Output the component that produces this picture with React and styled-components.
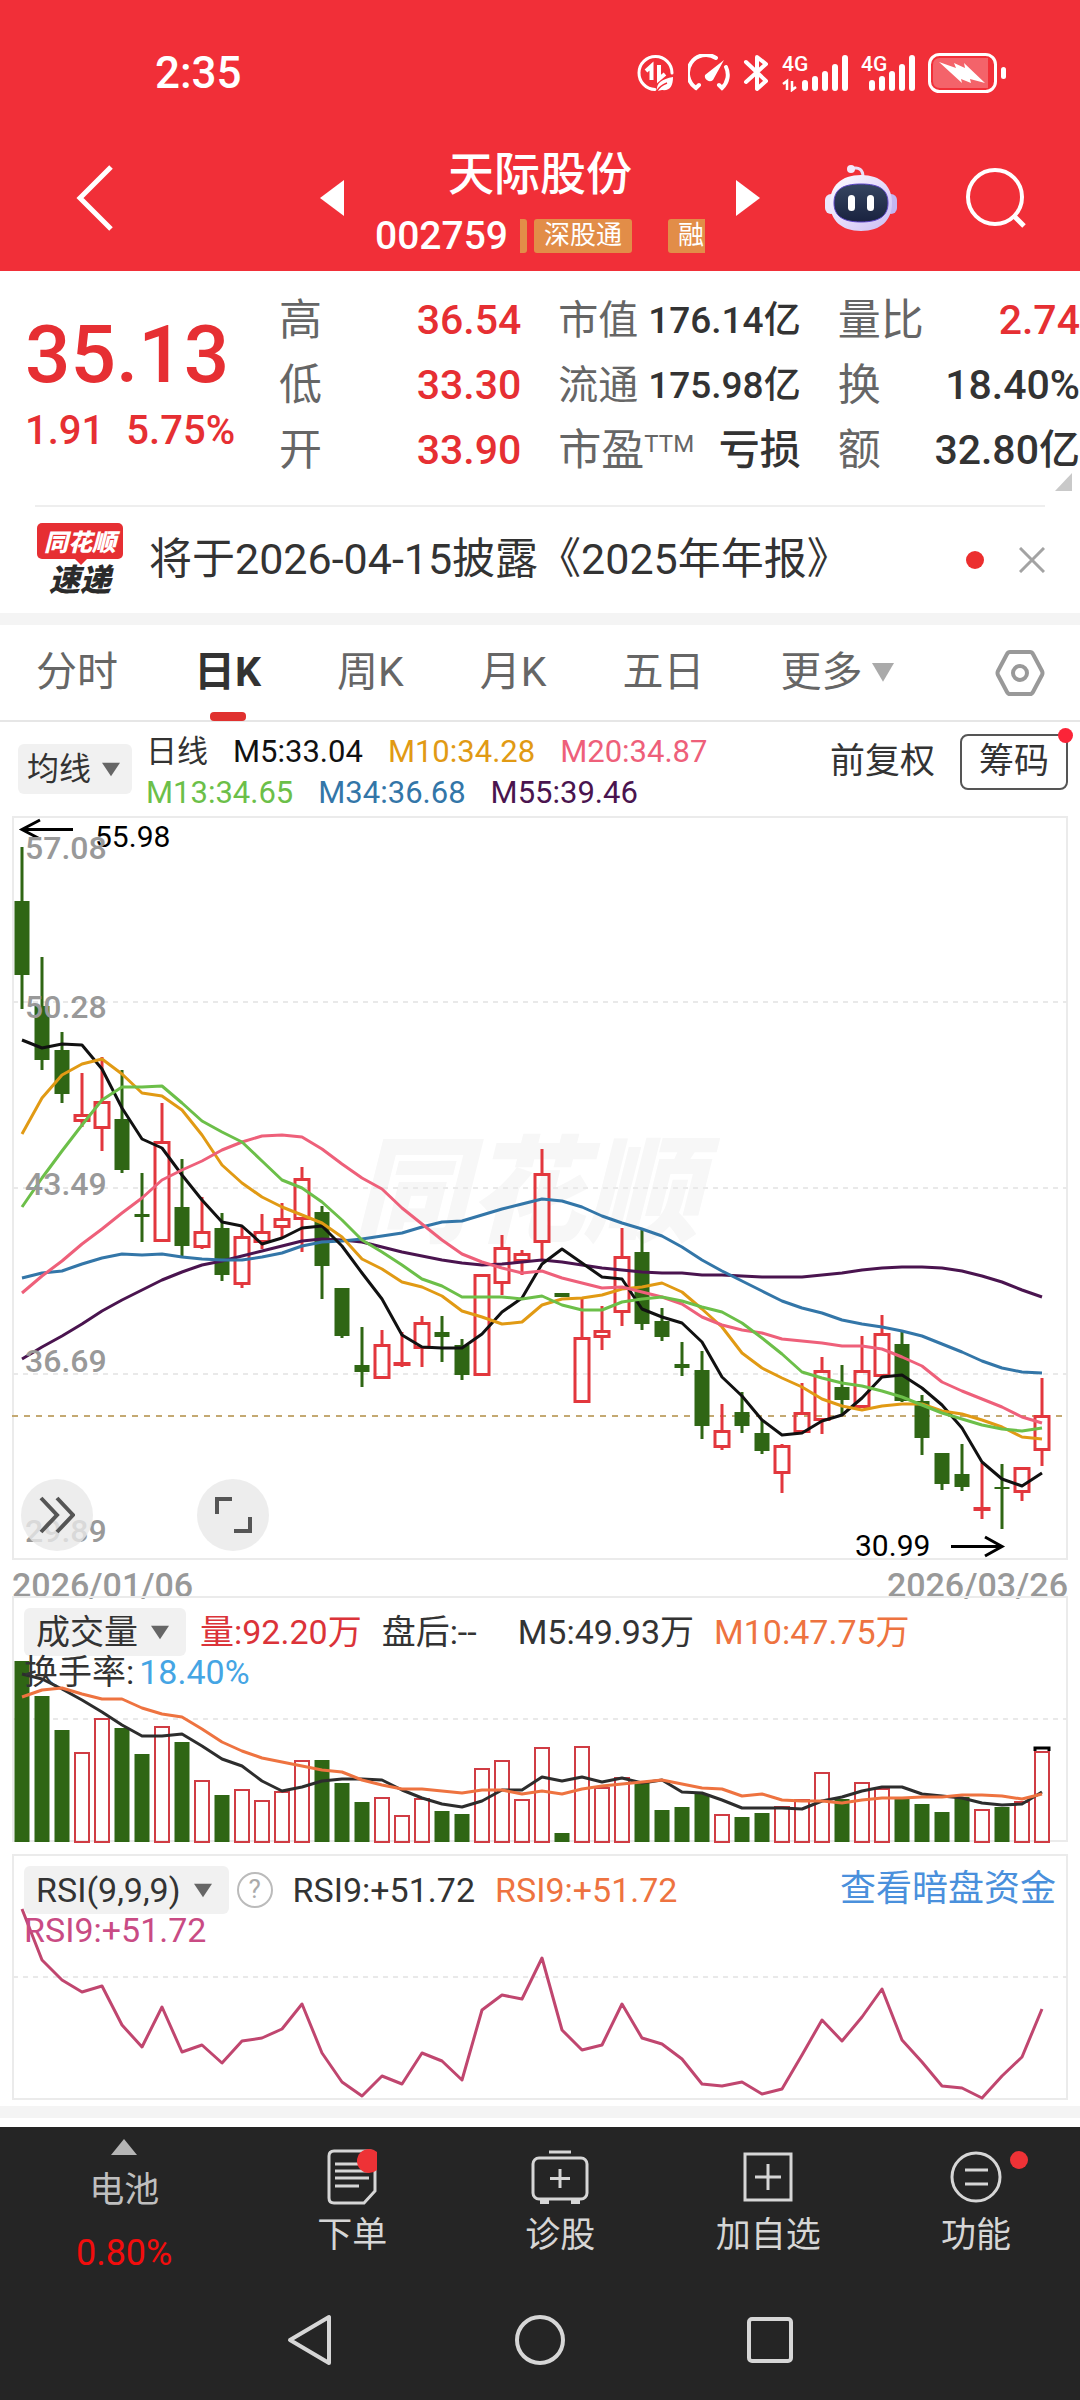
import React from 'react'
import styled, { createGlobalStyle, css } from 'styled-components'

const UP = '#e2373d'
const DOWN = '#2f6614'

// one entry per day: colour, high, body top, body bottom, low (chart units, y grows down)
const candles = [
  ['g', 847, 901, 975, 1009], ['g', 957, 1006, 1060, 1070], ['g', 1032, 1050, 1094, 1103], ['r', 1073, 1114, 1122, 1127],
  ['r', 1057, 1101, 1129, 1151], ['g', 1070, 1119, 1170, 1173], ['g', 1173, 1214, 1217, 1242], ['r', 1103, 1141, 1242, 1242],
  ['g', 1159, 1207, 1246, 1256], ['r', 1197, 1231, 1248, 1249], ['g', 1213, 1228, 1275, 1281], ['r', 1227, 1236, 1285, 1288],
  ['r', 1214, 1231, 1243, 1249], ['r', 1203, 1218, 1228, 1238], ['r', 1167, 1178, 1220, 1252], ['g', 1206, 1212, 1266, 1299],
  ['g', 1288, 1288, 1336, 1338], ['g', 1327, 1365, 1372, 1387], ['r', 1330, 1344, 1379, 1379], ['r', 1332, 1362, 1366, 1367],
  ['r', 1316, 1322, 1349, 1367], ['g', 1316, 1332, 1337, 1362], ['g', 1339, 1345, 1375, 1380], ['r', 1274, 1274, 1376, 1376],
  ['r', 1235, 1247, 1284, 1295], ['r', 1250, 1253, 1262, 1275], ['r', 1149, 1173, 1243, 1260], ['g', 1293, 1293, 1297, 1297],
  ['r', 1297, 1337, 1403, 1403], ['r', 1306, 1330, 1338, 1350], ['r', 1228, 1256, 1313, 1326], ['g', 1230, 1252, 1324, 1330],
  ['g', 1308, 1321, 1337, 1341], ['g', 1342, 1364, 1368, 1376], ['g', 1351, 1370, 1426, 1439], ['r', 1404, 1430, 1448, 1450],
  ['g', 1392, 1412, 1426, 1433], ['g', 1420, 1433, 1451, 1454], ['r', 1444, 1445, 1474, 1493], ['r', 1383, 1412, 1433, 1433],
  ['r', 1357, 1370, 1421, 1434], ['g', 1365, 1387, 1400, 1414], ['r', 1336, 1370, 1408, 1408], ['r', 1315, 1333, 1377, 1377],
  ['g', 1331, 1344, 1401, 1402], ['g', 1395, 1401, 1438, 1455], ['g', 1453, 1453, 1484, 1490], ['g', 1444, 1474, 1487, 1491],
  ['r', 1463, 1507, 1511, 1519], ['g', 1464, 1487, 1489, 1529], ['r', 1467, 1467, 1493, 1501], ['r', 1378, 1415, 1451, 1466],
]

const averages = [
  {
    color: '#4a144f',
    points: [1359, 1347, 1336, 1324, 1311, 1300, 1290, 1280, 1272, 1265, 1261, 1256, 1251, 1246, 1241, 1239, 1240, 1242, 1247, 1252, 1256, 1260, 1263, 1265, 1264, 1262, 1260, 1262, 1265, 1268, 1270, 1272, 1273, 1273, 1275, 1275, 1276, 1277, 1277, 1277, 1275, 1273, 1270, 1268, 1267, 1267, 1268, 1271, 1276, 1282, 1290, 1297],
  },
  {
    color: '#3376a8',
    points: [1278, 1273, 1271, 1264, 1258, 1254, 1255, 1254, 1257, 1259, 1260, 1260, 1257, 1253, 1246, 1242, 1241, 1239, 1236, 1233, 1227, 1222, 1221, 1215, 1209, 1204, 1199, 1201, 1207, 1216, 1223, 1229, 1236, 1247, 1260, 1271, 1281, 1291, 1301, 1308, 1313, 1320, 1324, 1327, 1331, 1336, 1344, 1352, 1361, 1368, 1372, 1373],
  },
  {
    color: '#111111',
    points: [1040, 1048, 1044, 1045, 1069, 1108, 1139, 1148, 1175, 1200, 1222, 1226, 1244, 1238, 1228, 1226, 1246, 1273, 1299, 1335, 1347, 1348, 1348, 1334, 1312, 1298, 1264, 1249, 1263, 1277, 1279, 1309, 1317, 1323, 1342, 1377, 1396, 1420, 1435, 1433, 1421, 1415, 1398, 1377, 1375, 1388, 1405, 1428, 1462, 1479, 1486, 1473],
  },
  {
    color: '#e19a14',
    points: [1134, 1098, 1075, 1064, 1059, 1074, 1093, 1096, 1110, 1135, 1165, 1183, 1197, 1207, 1215, 1223, 1237, 1259, 1269, 1282, 1287, 1296, 1311, 1317, 1324, 1322, 1305, 1299, 1298, 1295, 1289, 1287, 1283, 1292, 1309, 1327, 1353, 1368, 1378, 1387, 1399, 1406, 1410, 1406, 1404, 1404, 1411, 1414, 1420, 1427, 1437, 1439],
  },
  {
    color: '#ee607a',
    points: [1293, 1276, 1261, 1244, 1229, 1213, 1198, 1180, 1170, 1161, 1150, 1142, 1136, 1135, 1137, 1149, 1164, 1178, 1189, 1208, 1224, 1240, 1254, 1262, 1268, 1273, 1271, 1278, 1283, 1288, 1287, 1292, 1297, 1304, 1317, 1325, 1330, 1333, 1339, 1341, 1343, 1346, 1346, 1349, 1357, 1366, 1382, 1391, 1399, 1407, 1417, 1423],
  },
  {
    color: '#6cbf49',
    points: [1207, 1178, 1151, 1125, 1100, 1087, 1087, 1086, 1103, 1121, 1132, 1142, 1161, 1180, 1188, 1202, 1220, 1240, 1252, 1265, 1279, 1286, 1297, 1297, 1297, 1299, 1296, 1305, 1310, 1310, 1302, 1299, 1297, 1301, 1307, 1312, 1323, 1338, 1354, 1372, 1378, 1383, 1386, 1391, 1397, 1405, 1413, 1419, 1425, 1429, 1431, 1428],
  },
]

const volumes = [1661, 1696, 1730, 1752, 1718, 1728, 1754, 1726, 1742, 1780, 1795, 1789, 1800, 1791, 1760, 1760, 1783, 1802, 1797, 1815, 1798, 1811, 1814, 1768, 1760, 1799, 1747, 1833, 1746, 1787, 1777, 1781, 1810, 1807, 1794, 1814, 1817, 1813, 1806, 1799, 1772, 1799, 1782, 1788, 1799, 1804, 1812, 1797, 1809, 1807, 1801, 1751]
const volumeM5 = [1674, 1679, 1689, 1700, 1712, 1725, 1736, 1736, 1734, 1746, 1759, 1766, 1781, 1791, 1787, 1781, 1779, 1779, 1780, 1790, 1798, 1804, 1807, 1801, 1790, 1790, 1777, 1781, 1777, 1782, 1778, 1783, 1780, 1792, 1793, 1800, 1808, 1808, 1808, 1809, 1801, 1797, 1791, 1787, 1787, 1794, 1796, 1798, 1803, 1805, 1804, 1792]
const volumeM10 = [1697, 1690, 1688, 1694, 1699, 1699, 1708, 1714, 1717, 1729, 1742, 1751, 1758, 1762, 1766, 1770, 1772, 1780, 1785, 1789, 1789, 1791, 1793, 1790, 1790, 1794, 1791, 1794, 1789, 1786, 1784, 1782, 1780, 1784, 1788, 1789, 1796, 1794, 1800, 1801, 1801, 1803, 1800, 1798, 1798, 1797, 1797, 1795, 1795, 1796, 1799, 1794]
const rsi = [1909, 1960, 1980, 1992, 1986, 2025, 2047, 2007, 2052, 2045, 2063, 2041, 2038, 2029, 2004, 2053, 2082, 2096, 2076, 2084, 2053, 2061, 2080, 2010, 1995, 1999, 1958, 2030, 2050, 2045, 2004, 2038, 2044, 2059, 2084, 2086, 2082, 2094, 2089, 2055, 2020, 2041, 2017, 1989, 2040, 2062, 2086, 2088, 2098, 2076, 2057, 2009]

const dayX = (i) => 22 + i * 20
const toPoints = (list) => list.map((y, i) => `${dayX(i)},${y}`).join(' ')

const Line = ({ points, color }) => (
  <polyline points={toPoints(points)} fill="none" stroke={color} strokeWidth="3" strokeLinejoin="round" />
)

const GridLine = ({ y }) => (
  <line x1="13" x2="1067" y1={y} y2={y} stroke="#e9e9e9" strokeWidth="2" strokeDasharray="5 5" />
)

const Candle = ({ x, data }) => {
  const [kind, high, top, bottom, low] = data
  if (kind === 'g') {
    return (
      <g fill={DOWN}>
        <rect x={x - 1.5} y={high} width="3" height={low - high} />
        <rect x={x - 7.5} y={top} width="15" height={bottom - top} />
      </g>
    )
  }
  return (
    <g stroke={UP} fill="none" strokeWidth="3">
      <path d={`M${x} ${high}V${top}M${x} ${bottom}V${low}`} />
      <rect x={x - 7} y={top + 1.5} width="14" height={Math.max(bottom - top - 3, 1)} />
    </g>
  )
}

const VolumeBar = ({ x, top, kind }) =>
  kind === 'g' ? (
    <rect x={x - 7.5} y={top} width="15" height={1842 - top} fill={DOWN} />
  ) : (
    <rect x={x - 7} y={top + 1} width="14" height={1841 - top} fill="none" stroke="#d03c44" strokeWidth="2" />
  )

const CandleChart = () => (
  <Chart viewBox="0 816 1080 744" role="img" aria-label="日K">
    <Watermark x="352" y="1233">同花顺</Watermark>
    <rect x="13" y="817" width="1054" height="742" fill="none" stroke="#ebebeb" strokeWidth="2" />
    <GridLine y={1002} />
    <GridLine y={1188} />
    <GridLine y={1374} />
    <line x1="12" x2="1067" y1="1416" y2="1416" stroke="#c4a972" strokeWidth="2" strokeDasharray="6 6" />
    {candles.map((c, i) => (
      <Candle key={i} x={dayX(i)} data={c} />
    ))}
    {averages.map((a) => (
      <Line key={a.color} {...a} />
    ))}
    <path d="M73 829.500H22M40 820L22 829.500L40 839" fill="none" stroke="#000" strokeWidth="3" />
    <ExtremeText x="95" y="847">55.98</ExtremeText>
    <path d="M951 1546.500H1002M985 1537L1002 1546.500L985 1556" fill="none" stroke="#000" strokeWidth="3" />
    <ExtremeText x="855" y="1556">30.99</ExtremeText>
    <AxisText x="25" y="859">57.08</AxisText>
    <AxisText x="25" y="1018">50.28</AxisText>
    <AxisText x="25" y="1195">43.49</AxisText>
    <AxisText x="25" y="1372">36.69</AxisText>
    <AxisText x="25" y="1542">29.89</AxisText>
  </Chart>
)

const VolumeChart = () => (
  <Chart viewBox="0 1596 1080 248" role="img" aria-label="成交量">
    <rect x="13" y="1597" width="1054" height="244" fill="none" stroke="#ebebeb" strokeWidth="2" />
    <GridLine y={1719} />
    {volumes.map((v, i) => (
      <VolumeBar key={i} x={dayX(i)} top={v} kind={candles[i][0]} />
    ))}
    <path d="M1035 1751V1748H1049V1751" fill="none" stroke="#000" strokeWidth="3" />
    <Line points={volumeM5} color="#2d2d2d" />
    <Line points={volumeM10} color="#ee7340" />
  </Chart>
)

const RsiChart = () => (
  <Chart viewBox="0 1854 1080 246" role="img" aria-label="RSI">
    <rect x="13" y="1855" width="1054" height="244" fill="none" stroke="#ebebeb" strokeWidth="2" />
    <GridLine y={1977} />
    <Line points={rsi} color="#c0466f" />
  </Chart>
)

const DataSaverIcon = () => (
  <svg width="38" height="38" viewBox="0 0 38 38" fill="none" stroke="#fff" strokeWidth="3">
    <path d="M18 35.500A16.500 16.500 0 1 1 35 19" strokeLinecap="round" />
    <path d="M9 17L14.500 12V26M22 11V25L28 20" strokeWidth="4" />
    <path d="M20 37C19 29 25 25 36 23C36 32 33 37 25 36Z" fill="#fff" stroke="none" />
    <path d="M20 37C22 33 25 31 30 29" stroke="#f12f38" strokeWidth="1.500" />
  </svg>
)

const GaugeIcon = () => (
  <svg width="42" height="38" viewBox="0 0 42 38" fill="none" stroke="#fff" strokeWidth="4" strokeLinecap="round">
    <path d="M28 4A18 18 0 0 0 8 34L11 31" />
    <path d="M38 13A18 18 0 0 1 34 34L31 31" />
    <path d="M36 6L25 26A5 5 0 0 1 17 21Z" fill="#fff" stroke="none" />
  </svg>
)

const BluetoothIcon = () => (
  <svg width="26" height="38" viewBox="0 0 26 38" fill="none" stroke="#fff" strokeWidth="4" strokeLinejoin="round" strokeLinecap="round">
    <path d="M3 8L23 27L14 35V3L23 10L3 28" />
  </svg>
)

const SignalIcon = ({ data }) => (
  <svg width={data ? 66 : 54} height="38" viewBox={data ? '0 0 66 38' : '12 0 54 38'}>
    <text x={data ? 0 : 12} y="17" fontSize="21" fontWeight="500" fill="#fff">4G</text>
    {data && <path d="M1 30L5 27V36M10 27V36L14 33" fill="none" stroke="#fff" strokeWidth="2.500" />}
    <g stroke="#fff" strokeWidth="6" strokeLinecap="round">
      <path d="M23 29V34M33 25V34M43 20V34M53 13V34M63 4V34" />
    </g>
  </svg>
)

const BatteryIcon = () => (
  <svg width="78" height="40" viewBox="0 0 78 40">
    <path d="M12 5H60V35H12Q5 35 5 28V12Q5 5 12 5Z" fill="#fff" fillOpacity=".25" />
    <rect x="1.500" y="1.500" width="66" height="37" rx="10" fill="none" stroke="#fff" strokeWidth="3" />
    <rect x="73" y="14" width="5" height="12" rx="2.500" fill="#fff" />
    <path d="M11 9L28 15L26 10L37 15L36 10L57 30L42 26L43 30L33 26L34 30Z" fill="#fff" />
  </svg>
)

const RobotIcon = () => (
  <svg width="72" height="68" viewBox="0 0 72 68">
    <defs>
      <linearGradient id="shell" x1="0" y1="0" x2="1" y2="1">
        <stop offset="0" stopColor="#fff" />
        <stop offset=".5" stopColor="#e6dcfb" />
        <stop offset="1" stopColor="#c9bdf3" />
      </linearGradient>
      <linearGradient id="face" x1="0" y1="0" x2="0" y2="1">
        <stop offset="0" stopColor="#354560" />
        <stop offset="1" stopColor="#19223f" />
      </linearGradient>
    </defs>
    <path d="M26 5C34 2 38 6 38 13" fill="none" stroke="#eadff8" strokeWidth="3" />
    <circle cx="26" cy="5" r="4" fill="#f3e9fb" />
    <rect x="0" y="30" width="12" height="20" rx="6" fill="#ece6fc" />
    <rect x="60" y="30" width="12" height="20" rx="6" fill="#c3b6f1" />
    <path d="M36 11C56 11 67 22 67 39C67 56 56 67 36 67C16 67 5 56 5 39C5 22 16 11 36 11Z" fill="url(#shell)" />
    <path d="M36 20C55 20 63 26 63 39C63 52 54 58 36 58C18 58 9 52 9 39C9 26 17 20 36 20Z" fill="url(#face)" stroke="#5d45c8" />
    <rect x="23" y="31" width="7" height="16" rx="3.500" fill="#fff" />
    <rect x="42" y="31" width="7" height="16" rx="3.500" fill="#fff" />
  </svg>
)

const stats = [
  [
    { label: '高', value: '36.54', up: true },
    { label: '低', value: '33.30', up: true },
    { label: '开', value: '33.90', up: true },
  ],
  [
    { label: '市值', value: '176.14亿', small: true },
    { label: '流通', value: '175.98亿', small: true },
    { label: '市盈', sup: 'TTM', value: '亏损' },
  ],
  [
    { label: '量比', value: '2.74', up: true },
    { label: '换', value: '18.40%' },
    { label: '额', value: '32.80亿' },
  ],
]

const tabs = ['分时', '日K', '周K', '月K', '五日']

const legend = [
  [['日线', '#333'], ['M5:33.04', '#111'], ['M10:34.28', '#e19a14'], ['M20:34.87', '#ee607a']],
  [['M13:34.65', '#6cbf49'], ['M34:36.68', '#3376a8'], ['M55:39.46', '#4a144f']],
]

const OrderIcon = () => (
  <svg width="50" height="56" viewBox="0 0 50 56" fill="none" stroke="#d6d6d6" strokeWidth="3">
    <path d="M7 2H43Q48 2 48 7V42L37 54H7Q2 54 2 49V7Q2 2 7 2Z" />
    <path d="M8 15H36M8 22H42M8 29H42M8 37H32" />
    <circle cx="42" cy="12" r="12" fill="#ee3236" stroke="none" />
  </svg>
)

const DiagnoseIcon = () => (
  <svg width="58" height="54" viewBox="0 0 58 54" fill="none" stroke="#d6d6d6" strokeWidth="3">
    <rect x="2" y="8" width="54" height="41" rx="6" />
    <path d="M18 2H40M29 19V38M19 28.500H39" />
    <path d="M9 52H18M40 52H49" strokeWidth="4" />
  </svg>
)

const AddIcon = () => (
  <svg width="50" height="50" viewBox="0 0 50 50" fill="none" stroke="#d6d6d6" strokeWidth="3">
    <path d="M2 2H48V48H2ZM25 12V38M12 25H38" />
  </svg>
)

const FunctionIcon = () => (
  <svg width="52" height="52" viewBox="0 0 52 52" fill="none" stroke="#d6d6d6" strokeWidth="3">
    <circle cx="26" cy="26" r="24" />
    <path d="M15 19H38M15 33H38" />
  </svg>
)

const actions = [
  { label: '下单', Icon: OrderIcon },
  { label: '诊股', Icon: DiagnoseIcon },
  { label: '加自选', Icon: AddIcon },
  { label: '功能', Icon: FunctionIcon, dot: true },
]

const App = () => {
  return (
    <Page>
      <GlobalStyle />
      <Header>
        <StatusBar>
          <Time>2:35</Time>
          <StatusIcons>
            <DataSaverIcon />
            <GaugeIcon />
            <BluetoothIcon />
            <SignalIcon data />
            <SignalIcon />
            <BatteryIcon />
          </StatusIcons>
        </StatusBar>
        <NavBar>
          <NavLeft>
            <Button aria-label="返回">
              <svg width="38" height="66" viewBox="0 0 38 66" fill="none" stroke="#fff" strokeWidth="5">
                <path d="M35 2L4 33L35 64" />
              </svg>
            </Button>
          </NavLeft>
          <Switcher>
            <Button aria-label="上一只">
              <svg width="24" height="36" viewBox="0 0 24 36"><path d="M24 0V36L0 18Z" fill="#fff" /></svg>
            </Button>
            <Stock>
              <StockName>天际股份</StockName>
              <StockCode>
                002759
                <TagStrip>
                  <TagSliver />
                  <Tag>深股通</Tag>
                  <Tag $cut>融</Tag>
                </TagStrip>
              </StockCode>
            </Stock>
            <Button aria-label="下一只">
              <svg width="24" height="36" viewBox="0 0 24 36"><path d="M0 0V36L24 18Z" fill="#fff" /></svg>
            </Button>
          </Switcher>
          <NavRight>
            <Button aria-label="智能助手"><RobotIcon /></Button>
            <Button aria-label="搜索">
              <svg width="60" height="60" viewBox="0 0 60 60" fill="none" stroke="#fff" strokeWidth="4">
                <circle cx="29" cy="29" r="27" />
                <path d="M47 47L58 58" strokeWidth="5" />
              </svg>
            </Button>
          </NavRight>
        </NavBar>
      </Header>

      <Quote>
        <PriceBlock>
          <Price>35.13</Price>
          <Change>
            <span>1.91</span>
            <span>5.75%</span>
          </Change>
        </PriceBlock>
        {stats.map((column, i) => (
          <StatColumn key={i}>
            {column.map((s) => (
              <Stat key={s.label}>
                <StatLabel $small={s.small}>
                  {s.label}
                  {s.sup && <Sup>{s.sup}</Sup>}
                </StatLabel>
                <StatValue $up={s.up} $small={s.small}>{s.value}</StatValue>
              </Stat>
            ))}
          </StatColumn>
        ))}
        <Corner viewBox="0 0 17 18"><path d="M17 0V18H0Z" fill="#c9c9c9" /></Corner>
      </Quote>

      <Notice>
        <Brand>
          <BrandTop>同花顺</BrandTop>
          <BrandBottom>速递</BrandBottom>
        </Brand>
        <NoticeText href="#notice">将于2026-04-15披露《2025年年报》</NoticeText>
        <Dot />
        <Button aria-label="关闭">
          <svg width="26" height="26" viewBox="0 0 26 26" stroke="#a3a3a3" strokeWidth="3">
            <path d="M1 1L25 25M25 1L1 25" />
          </svg>
        </Button>
      </Notice>
      <Strip />

      <Tabs>
        {tabs.map((t) => (
          <Tab key={t} $active={t === '日K'}>{t}</Tab>
        ))}
        <Tab>
          更多
          <Caret $size={22} $color="#aaa" viewBox="0 0 20 20"><path d="M0 1H20L10 18Z" /></Caret>
        </Tab>
        <Settings aria-label="设置">
          <svg width="50" height="48" viewBox="0 0 50 48" fill="none" stroke="#999" strokeWidth="4">
            <path d="M15 3H35Q37 3 38 5L47 22Q48 24 47 26L38 43Q37 45 35 45H15Q13 45 12 43L3 26Q2 24 3 22L12 5Q13 3 15 3Z" />
            <circle cx="25" cy="24" r="7" />
          </svg>
        </Settings>
      </Tabs>

      <Toolbar>
        <Chip>
          均线
          <Caret $size={18} $color="#666" viewBox="0 0 20 20"><path d="M0 3H20L10 18Z" /></Caret>
        </Chip>
        <Legend>
          {legend.map((row, i) => (
            <LegendRow key={i}>
              {row.map(([text, color]) => (
                <LegendItem key={text} $color={color}>{text}</LegendItem>
              ))}
            </LegendRow>
          ))}
        </Legend>
        <ToolbarRight>
          <Adjust>前复权</Adjust>
          <ChipsButton>
            筹码
            <Badge />
          </ChipsButton>
        </ToolbarRight>
      </Toolbar>

      <Panel>
        <CandleChart />
        <ChartButtons>
          <RoundButton aria-label="展开">
            <svg width="36" height="38" viewBox="0 0 36 38" fill="none" stroke="#555" strokeWidth="4">
              <path d="M2 2L18 19L2 36M18 2L34 19L18 36" />
            </svg>
          </RoundButton>
          <RoundButton aria-label="全屏">
            <svg width="38" height="38" viewBox="0 0 38 38" fill="none" stroke="#555" strokeWidth="4">
              <path d="M3 18V3H18M36 21V35H20" />
            </svg>
          </RoundButton>
        </ChartButtons>
      </Panel>
      <Dates>
        <span>2026/01/06</span>
        <span>2026/03/26</span>
      </Dates>

      <Panel>
        <VolumeChart />
        <PanelHead>
          <PanelRow>
            <PanelChip>
              成交量
              <Caret $size={18} $color="#666" viewBox="0 0 20 20"><path d="M0 3H20L10 18Z" /></Caret>
            </PanelChip>
            <PanelText $color="#db3339">量:92.20万</PanelText>
            <AfterHours>盘后:--</AfterHours>
            <PanelText>M5:49.93万</PanelText>
            <PanelText $color="#ee7340">M10:47.75万</PanelText>
          </PanelRow>
          <SecondRow>
            换手率:<Turnover>18.40%</Turnover>
          </SecondRow>
        </PanelHead>
      </Panel>

      <RsiPanel>
        <RsiChart />
        <PanelHead>
          <PanelRow>
            <PanelChip>
              RSI(9,9,9)
              <Caret $size={18} $color="#666" viewBox="0 0 20 20"><path d="M0 3H20L10 18Z" /></Caret>
            </PanelChip>
            <Help aria-label="说明">?</Help>
            <PanelText>RSI9:+51.72</PanelText>
            <PanelText $color="#ee7340">RSI9:+51.72</PanelText>
            <FundsLink href="#funds">查看暗盘资金</FundsLink>
          </PanelRow>
          <SecondRow $color="#c94b84">RSI9:+51.72</SecondRow>
        </PanelHead>
      </RsiPanel>
      <Strip />

      <BottomBar>
        <Actions>
          <Sector>
            <svg width="26" height="16" viewBox="0 0 26 16"><path d="M13 0L26 16H0Z" fill="#b5b5b5" /></svg>
            <SectorName>电池</SectorName>
            <SectorChange>0.80%</SectorChange>
          </Sector>
          {actions.map(({ label, Icon, dot }) => (
            <Action key={label}>
              <ActionIcon>
                <Icon />
                {dot && <ActionDot />}
              </ActionIcon>
              {label}
            </Action>
          ))}
        </Actions>
        <SystemNav>
          <Button aria-label="系统返回">
            <svg width="46" height="52" viewBox="0 0 46 52" fill="none" stroke="#d6d6d6" strokeWidth="4" strokeLinejoin="round">
              <path d="M42 3V49L3 26Z" />
            </svg>
          </Button>
          <Button aria-label="主屏幕">
            <svg width="50" height="50" viewBox="0 0 50 50" fill="none" stroke="#d6d6d6" strokeWidth="4">
              <circle cx="25" cy="25" r="23" />
            </svg>
          </Button>
          <Button aria-label="最近任务">
            <svg width="46" height="46" viewBox="0 0 46 46" fill="none" stroke="#d6d6d6" strokeWidth="4">
              <rect x="2" y="2" width="42" height="42" rx="3" />
            </svg>
          </Button>
        </SystemNav>
      </BottomBar>
    </Page>
  )
}

export default App

const GlobalStyle = createGlobalStyle`
  * {
    box-sizing: border-box;
  }
  body {
    margin: 0;
    background: #fff;
    color: #333;
    font-family: Roboto, 'Noto Sans CJK SC', sans-serif;
    line-height: 1.2;
  }
`
const Page = styled.div`
  display: flex;
  flex-direction: column;
  min-height: 100vh;
  overflow: hidden;
`
const Button = styled.button`
  display: flex;
  align-items: center;
  justify-content: center;
  padding: 0;
  border: none;
  background: none;
  color: inherit;
  font: inherit;
  white-space: nowrap;
  cursor: pointer;
`
const Header = styled.header`
  background: #f12f38;
  color: white;
`
const StatusBar = styled.div`
  display: flex;
  align-items: center;
  justify-content: space-between;
  height: 130px;
  padding: 16px 74px 0 155px;
`
const Time = styled.div`
  font-size: 44px;
  font-weight: 500;
`
const StatusIcons = styled.div`
  display: flex;
  align-items: center;
  gap: 13px;
`
const NavBar = styled.nav`
  display: grid;
  grid-template-columns: 1fr auto 1fr;
  align-items: center;
  height: 141px;
  padding: 0 54px 6px 76px;
`
const NavLeft = styled.div`
  display: flex;
`
const NavRight = styled.div`
  display: flex;
  align-items: center;
  justify-content: flex-end;
  gap: 69px;
`
const Switcher = styled.div`
  display: flex;
  align-items: center;
  gap: 31px;
  margin-right: 22px;
`
const Stock = styled.div`
  display: flex;
  flex-direction: column;
  align-items: center;
  padding-top: 12px;
`
const StockName = styled.h1`
  margin: 0;
  font-size: 46px;
  font-weight: 500;
  line-height: 64px;
`
const StockCode = styled.div`
  display: flex;
  align-items: center;
  gap: 12px;
  font-size: 39px;
  font-weight: 500;
  line-height: 60px;
`
const TagStrip = styled.div`
  display: flex;
  gap: 7px;
`
const TagSliver = styled.span`
  width: 7px;
  height: 34px;
  border-radius: 0 3px 3px 0;
  background: #e28d48;
`
const Tag = styled.span`
  height: 34px;
  padding: 0 10px;
  border-radius: 3px;
  background: #e28d48;
  font-size: 26px;
  font-weight: 400;
  line-height: 32px;
  ${({ $cut }) =>
    $cut &&
    css`
      margin-left: 29px;
      padding-right: 1px;
      border-radius: 3px 0 0 3px;
    `}
`
const Quote = styled.section`
  position: relative;
  display: grid;
  grid-template-columns: 217px 1fr 1fr 1fr;
  gap: 37px;
  padding: 17px 0 22px 25px;
`
const PriceBlock = styled.div`
  padding-top: 19px;
  color: #e62f33;
  font-weight: 500;
  white-space: nowrap;
`
const Price = styled.div`
  font-size: 80px;
  line-height: 96px;
`
const Change = styled.div`
  display: flex;
  gap: 22px;
  font-size: 40px;
  line-height: 56px;
`
const StatColumn = styled.div`
  display: flex;
  flex-direction: column;
`
const Stat = styled.div`
  display: flex;
  justify-content: space-between;
  line-height: 65px;
  white-space: nowrap;
`
const StatLabel = styled.span`
  color: #666;
  font-size: ${({ $small }) => ($small ? '40px' : '43px')};
`
const Sup = styled.sup`
  font-size: 24px;
  line-height: 1;
  vertical-align: 13px;
`
const StatValue = styled.span`
  color: ${({ $up }) => ($up ? '#e62f33' : '#333')};
  font-size: ${({ $small }) => ($small ? '37px' : '41px')};
  font-weight: 500;
`
const Corner = styled.svg`
  position: absolute;
  right: 8px;
  bottom: 14px;
  width: 17px;
  height: 18px;
`
const Notice = styled.section`
  display: flex;
  align-items: center;
  height: 108px;
  margin: 0 35px;
  border-top: 2px solid #eee;
`
const Brand = styled.div`
  display: flex;
  flex-direction: column;
  align-items: center;
  width: 90px;
  margin-right: 24px;
  font-family: 'Noto Sans CJK SC', sans-serif;
  font-style: italic;
  font-weight: 900;
`
const BrandTop = styled.div`
  position: relative;
  width: 86px;
  border-radius: 5px;
  background: #e62f33;
  color: white;
  font-size: 24px;
  line-height: 36px;
  text-align: center;
  &::after {
    content: '';
    position: absolute;
    left: 38px;
    top: 36px;
    border: 6px solid transparent;
    border-top-color: #e62f33;
  }
`
const BrandBottom = styled.div`
  color: #2b2b2b;
  font-size: 31px;
  line-height: 38px;
`
const NoticeText = styled.a`
  flex: 1;
  color: #333;
  font-size: 43px;
  text-decoration: none;
  white-space: nowrap;
`
const Dot = styled.span`
  width: 18px;
  height: 18px;
  margin-right: 35px;
  border-radius: 50%;
  background: #ec2e2e;
`
const Strip = styled.div`
  height: 12px;
  background: #f4f4f4;
`
const Tabs = styled.nav`
  display: flex;
  align-items: center;
  gap: 76px;
  height: 97px;
  padding: 0 35px 0 36px;
  border-bottom: 2px solid #e6e6e6;
`
const Tab = styled(Button)`
  position: relative;
  gap: 9px;
  height: 96px;
  color: #666;
  font-size: 41px;
  ${({ $active }) =>
    $active &&
    css`
      color: #333;
      font-weight: 700;
      &::after {
        content: '';
        position: absolute;
        left: 50%;
        bottom: 0;
        width: 36px;
        height: 9px;
        margin-left: -18px;
        border-radius: 4px;
        background: #e0312f;
      }
    `}
`
const Caret = styled.svg`
  width: ${({ $size }) => $size}px;
  height: ${({ $size }) => $size}px;
  fill: ${({ $color }) => $color};
`
const Settings = styled(Button)`
  margin-left: auto;
`
const Toolbar = styled.div`
  display: flex;
  align-items: center;
  height: 94px;
  padding: 0 12px 0 18px;
`
const Chip = styled(Button)`
  gap: 11px;
  height: 50px;
  padding: 0 12px 0 9px;
  border-radius: 6px;
  background: #f1f1f1;
  font-size: 32px;
`
const Legend = styled.div`
  flex: 1;
  margin: 0 14px;
  padding-top: 6px;
`
const LegendRow = styled.div`
  display: flex;
  gap: 25px;
  font-size: 31px;
  line-height: 41px;
  white-space: nowrap;
`
const LegendItem = styled.span`
  color: ${({ $color }) => $color};
`
const ToolbarRight = styled.div`
  display: flex;
  align-items: center;
  gap: 25px;
  padding-bottom: 14px;
`
const Adjust = styled(Button)`
  font-size: 35px;
`
const ChipsButton = styled(Button)`
  position: relative;
  width: 108px;
  height: 56px;
  border: 2px solid #555;
  border-radius: 8px;
  font-size: 35px;
`
const Badge = styled.span`
  position: absolute;
  top: -8px;
  right: -7px;
  width: 15px;
  height: 15px;
  border-radius: 50%;
  background: #fb2438;
`
const Panel = styled.section`
  position: relative;
`
const RsiPanel = styled(Panel)`
  margin: 10px 0 6px;
`
const Chart = styled.svg`
  display: block;
  width: 100%;
  height: auto;
  overflow: visible;
`
const Watermark = styled.text`
  fill: #f7f7f7;
  font-family: 'Noto Sans CJK SC', sans-serif;
  font-size: 116px;
  font-style: italic;
  font-weight: 900;
`
const AxisText = styled.text`
  fill: #999;
  font-size: 32px;
  font-weight: 500;
`
const ExtremeText = styled.text`
  fill: #000;
  font-size: 30px;
`
const ChartButtons = styled.div`
  position: absolute;
  left: 21px;
  bottom: 9px;
  display: flex;
  gap: 104px;
`
const RoundButton = styled(Button)`
  width: 72px;
  height: 72px;
  border-radius: 50%;
  background: rgba(232, 232, 232, 0.8);
`
const Dates = styled.div`
  display: flex;
  justify-content: space-between;
  height: 36px;
  padding: 0 12px;
  color: #999;
  font-size: 34px;
  font-weight: 500;
  line-height: 50px;
`
const PanelHead = styled.div`
  position: absolute;
  top: 12px;
  left: 24px;
  right: 24px;
  font-size: 34px;
`
const PanelRow = styled.div`
  display: flex;
  align-items: center;
  gap: 20px;
  height: 48px;
`
const PanelChip = styled(Button)`
  gap: 13px;
  height: 48px;
  margin-right: -6px;
  padding: 0 17px 0 12px;
  border-radius: 6px;
  background: #f1f1f1;
`
const PanelText = styled.span`
  color: ${({ $color }) => $color || '#333'};
  white-space: nowrap;
`
const AfterHours = styled(PanelText)`
  min-width: 116px;
`
const SecondRow = styled.div`
  color: ${({ $color }) => $color || '#333'};
  line-height: 32px;
`
const Turnover = styled.span`
  margin-left: 5px;
  color: #45a5e4;
`
const Help = styled(Button)`
  width: 36px;
  height: 36px;
  margin-left: -6px;
  border: 2px solid #bbb;
  border-radius: 50%;
  color: #aaa;
  font-size: 26px;
`
const FundsLink = styled.a`
  margin-left: auto;
  color: #4a90dc;
  font-size: 36px;
  text-decoration: none;
  white-space: nowrap;
`
const BottomBar = styled.footer`
  flex: 1;
  margin-top: 9px;
  background: #252525;
  color: #d6d6d6;
`
const Actions = styled.div`
  display: grid;
  grid-template-columns: 23% repeat(4, 1fr);
  height: 153px;
  font-size: 35px;
`
const Sector = styled(Button)`
  flex-direction: column;
  justify-content: flex-start;
  padding-top: 12px;
`
const SectorName = styled.span`
  color: #bfbfbf;
  line-height: 72px;
`
const SectorChange = styled.span`
  color: #f20d0d;
  font-size: 36px;
  line-height: 52px;
`
const Action = styled(Button)`
  flex-direction: column;
  justify-content: flex-start;
  padding-top: 20px;
  line-height: 58px;
`
const ActionIcon = styled.span`
  position: relative;
  display: flex;
  align-items: center;
  height: 60px;
`
const ActionDot = styled.span`
  position: absolute;
  top: 4px;
  right: -26px;
  width: 18px;
  height: 18px;
  border-radius: 50%;
  background: #ee3236;
`
const SystemNav = styled.nav`
  display: grid;
  grid-template-columns: repeat(3, 230px);
  justify-content: center;
  height: 120px;
`
